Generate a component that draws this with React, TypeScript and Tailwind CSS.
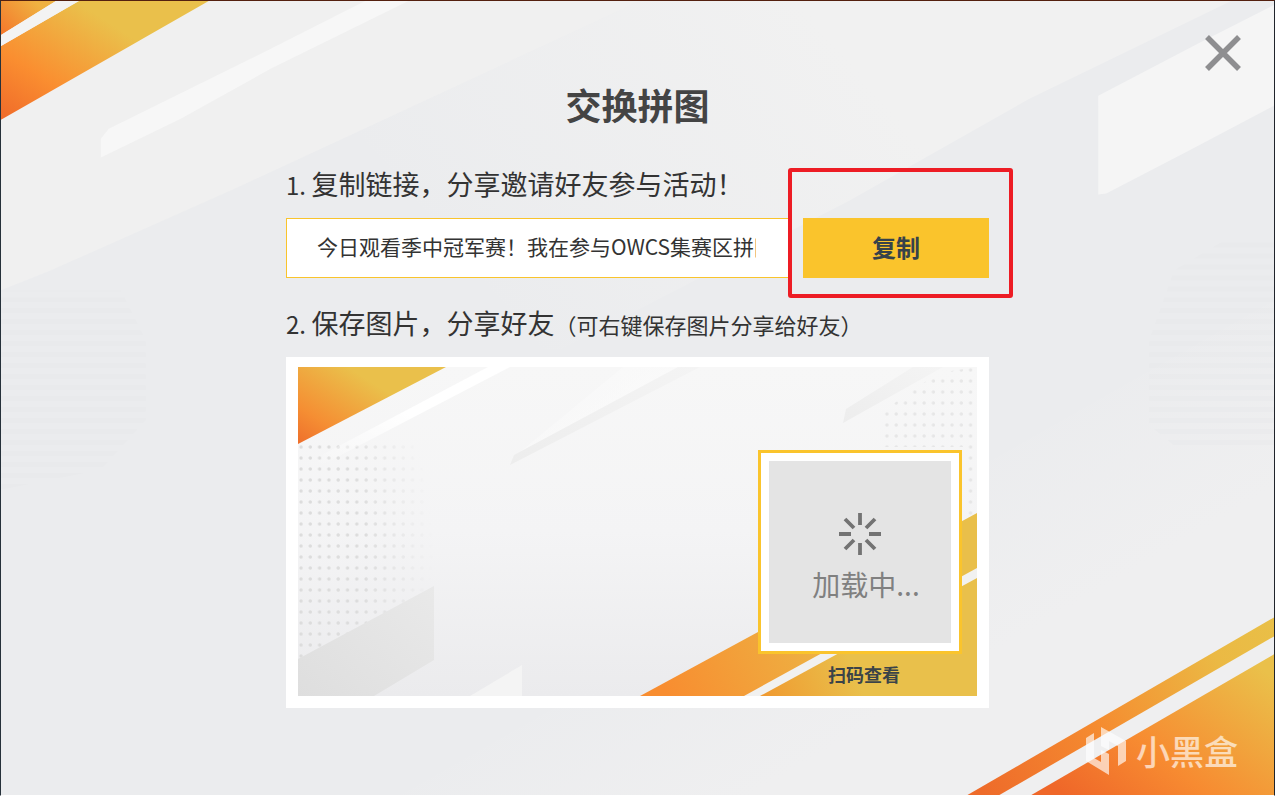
import React from "react";
import { clsx } from "clsx";

const shareText =
  "今日观看季中冠军赛！我在参与OWCS集赛区拼图活动，快来和我一起交换拼图吧！";

const Backdrop = () => (
  <svg
    className="absolute inset-0 h-full w-full"
    viewBox="0 0 1275 796"
    preserveAspectRatio="none"
    aria-hidden="true"
  >
    <defs>
      <linearGradient id="cornerTop" gradientUnits="userSpaceOnUse" x1="0" y1="115" x2="75" y2="0">
        <stop offset="0" stopColor="#f06c2a" />
        <stop offset="0.4" stopColor="#fa8e30" />
        <stop offset="1" stopColor="#eac04b" />
      </linearGradient>
      <linearGradient id="cornerTip" gradientUnits="userSpaceOnUse" x1="0" y1="32" x2="34" y2="0">
        <stop offset="0" stopColor="#f4792c" />
        <stop offset="1" stopColor="#efb141" />
      </linearGradient>
      <linearGradient id="stripe" gradientUnits="userSpaceOnUse" x1="985" y1="796" x2="1275" y2="625">
        <stop offset="0" stopColor="#ee6b2a" />
        <stop offset="0.4" stopColor="#f58c30" />
        <stop offset="0.8" stopColor="#ebb944" />
        <stop offset="1" stopColor="#e9bf47" />
      </linearGradient>
      <linearGradient id="cornerBottom" gradientUnits="userSpaceOnUse" x1="1090" y1="815" x2="1225" y2="640">
        <stop offset="0" stopColor="#ef6729" />
        <stop offset="0.4" stopColor="#f78b31" />
        <stop offset="1" stopColor="#eac04a" />
      </linearGradient>
      <linearGradient id="fadeLow" gradientUnits="userSpaceOnUse" x1="900" y1="480" x2="1000" y2="650">
        <stop offset="0" stopColor="#efeff0" stopOpacity="0" />
        <stop offset="1" stopColor="#efeff0" />
      </linearGradient>
      <linearGradient id="sheen" gradientUnits="userSpaceOnUse" x1="850" y1="60" x2="520" y2="340">
        <stop offset="0" stopColor="#f1f1f1" />
        <stop offset="1" stopColor="#f1f1f1" stopOpacity="0" />
      </linearGradient>
      <pattern id="pageLines" width="150" height="11" patternUnits="userSpaceOnUse">
        <rect width="150" height="5" fill="#e7e8ea" />
      </pattern>
    </defs>
    <rect width="1275" height="796" fill="#ebecee" />
    <polygon points="400,796 1275,300 1275,796" fill="url(#fadeLow)" />
    <polygon points="0,290 120,290 145,340 145,420 100,470 0,490" fill="url(#pageLines)" opacity="0.5" />
    <polygon points="1275,240 1225,240 1175,270 1150,340 1150,425 1180,450 1275,450" fill="url(#pageLines)" opacity="0.5" />
    <polygon points="0,0 640,0 230,190 50,270 0,290" fill="#f0f0f0" />
    <polygon points="640,0 1232,0 1030,98 850,200 560,350 300,350 230,190" fill="url(#sheen)" />
    <polygon points="108,128 250,58 335,15 365,0 408,0 270,68 180,118 100,157 100,138" fill="#f7f7f7" />
    <polygon points="1099,95 1200,42 1275,4 1275,105 1190,150 1107,193 1099,194" fill="#f5f5f5" />
    <polygon points="0,0 55,0 0,34" fill="url(#cornerTip)" />
    <polygon points="78,0 208,0 0,119 0,45" fill="url(#cornerTop)" />
    <polygon points="55,0 78,0 0,45 0,34" fill="#f3f3f3" />
    <polygon points="968,796 1275,618 1275,637 1000,796" fill="url(#stripe)" />
    <polygon points="1032,796 1275,655 1275,796" fill="url(#cornerBottom)" />
  </svg>
);

const PosterArt = () => (
  <svg
    className="absolute inset-0 h-full w-full"
    viewBox="0 0 679 329"
    preserveAspectRatio="none"
    aria-hidden="true"
  >
    <defs>
      <linearGradient id="posterBase" x1="0" y1="0" x2="0" y2="1">
        <stop offset="0" stopColor="#f7f7f7" />
        <stop offset="0.5" stopColor="#f4f4f5" />
        <stop offset="1" stopColor="#ebebed" />
      </linearGradient>
      <linearGradient id="posterCorner" gradientUnits="userSpaceOnUse" x1="0" y1="78" x2="50" y2="0">
        <stop offset="0" stopColor="#ee6e2b" />
        <stop offset="0.35" stopColor="#f58e33" />
        <stop offset="1" stopColor="#eac04b" />
      </linearGradient>
      <linearGradient id="posterStripe" gradientUnits="userSpaceOnUse" x1="370" y1="329" x2="560" y2="230">
        <stop offset="0" stopColor="#f88d30" />
        <stop offset="1" stopColor="#e9bf4a" />
      </linearGradient>
      <linearGradient id="posterFloor" gradientUnits="userSpaceOnUse" x1="460" y1="329" x2="550" y2="290">
        <stop offset="0" stopColor="#f0982f" />
        <stop offset="1" stopColor="#e9c04b" />
      </linearGradient>
      <linearGradient id="posterShade" x1="0" y1="1" x2="1" y2="0">
        <stop offset="0" stopColor="#dedede" />
        <stop offset="1" stopColor="#e9e9e9" />
      </linearGradient>
      <linearGradient id="ray" x1="0" y1="1" x2="1" y2="0">
        <stop offset="0" stopColor="#ffffff" stopOpacity="0" />
        <stop offset="0.5" stopColor="#ffffff" />
        <stop offset="1" stopColor="#ffffff" />
      </linearGradient>
      <linearGradient id="glow" x1="0" y1="0" x2="1" y2="0.6">
        <stop offset="0" stopColor="#fbfbfb" stopOpacity="0" />
        <stop offset="1" stopColor="#fbfbfb" />
      </linearGradient>
      <linearGradient id="rayShade" x1="0" y1="1" x2="1" y2="0">
        <stop offset="0" stopColor="#ededed" />
        <stop offset="1" stopColor="#f4f4f4" />
      </linearGradient>
      <pattern id="posterDots" width="9.3" height="11" patternUnits="userSpaceOnUse">
        <circle cx="3" cy="3" r="1.7" fill="#dcdcdc" />
      </pattern>
      <radialGradient id="dotFade" cx="0" cy="0.5" r="1">
        <stop offset="0.5" stopColor="#fff" />
        <stop offset="1" stopColor="#000" />
      </radialGradient>
      <mask id="dotMask">
        <rect y="65" width="135" height="240" fill="url(#dotFade)" />
      </mask>
    </defs>
    <rect width="679" height="329" fill="url(#posterBase)" />
    <rect y="76" width="135" height="215" fill="url(#posterDots)" mask="url(#dotMask)" />
    <polygon points="585,44 640,6 679,0 679,155 665,155 665,80 585,80" fill="url(#posterDots)" opacity="0.6" />
    <polygon points="190,0 212,0 20,100 20,90" fill="url(#ray)" />
    <polygon points="325,0 388,0 216,90" fill="url(#glow)" />
    <polygon points="380,0 402,0 212,98 216,88" fill="url(#rayShade)" />
    <polygon points="548,42 615,0 645,0 545,56" fill="url(#rayShade)" />
    <polygon points="0,292 136,219 136,293 76,329 0,329" fill="url(#posterShade)" />
    <polygon points="172,329 224,298 224,329" fill="#f4f4f4" />
    <polygon points="0,0 148,0 0,77" fill="url(#posterCorner)" />
    <polygon points="342,329 679,146 679,329" fill="#f1f1f0" />
    <polygon points="342,329 679,146 679,201 446,329" fill="url(#posterStripe)" />
    <polygon points="462,329 679,211 679,329" fill="url(#posterFloor)" />
  </svg>
);

const Spinner = () => (
  <svg
    className="h-11 w-11"
    viewBox="0 0 44 44"
    stroke="#737373"
    strokeWidth="3.8"
    aria-hidden="true"
  >
    <path d="M22 1v12M22 31v12M1 22h12M31 22h12M7 7l9 9M28 28l9 9M7 37l9-9M28 16l9-9" />
  </svg>
);

const Watermark = () => (
  <div className="absolute right-9 bottom-5 flex items-center gap-2.5 text-white/65">
    <svg className="h-12 w-10" viewBox="0 0 40 48" fill="currentColor" aria-hidden="true">
      <path d="M0 11l8-5v25l7 4V23l8 4v21L0 34z" />
      <path d="M15 0l25 14v20l-8 5V19l-9-5v9l-8-4z" />
    </svg>
    <span className="text-[34px] leading-12 font-medium">小黑盒</span>
  </div>
);

const StepTitle = ({
  step,
  children,
  className,
}: {
  step: string;
  children: React.ReactNode;
  className?: string;
}) => (
  <h2 className={clsx("h-9 text-[27px] leading-9 whitespace-nowrap text-[#333]", className)}>
    <span className="text-2xl leading-8">{step} </span>
    {children}
  </h2>
);

export default function App() {
  return (
    <div className="relative min-h-screen overflow-hidden border border-t-[#54200f] border-r-[#20242b] border-b-transparent border-l-[#26313a] font-['Noto_Sans_CJK_SC',sans-serif]">
      <Backdrop />

      <button type="button" aria-label="关闭" className="absolute top-8 right-8">
        <svg className="h-10 w-10" viewBox="0 0 40 40" stroke="#8e8e90" strokeWidth="5.5">
          <path d="M5 4l32 32M37 4L5 36" />
        </svg>
      </button>

      <main className="relative mx-auto w-full max-w-[703px] pt-[79px] pb-20">
        <h1 className="text-center text-4xl leading-12 font-bold text-[#444]">交换拼图</h1>

        <StepTitle step="1." className="mt-[38px]">
          复制链接，分享邀请好友参与活动！
        </StepTitle>
        <div className="mt-4 flex gap-3">
          <input
            type="text"
            readOnly
            aria-label="分享链接"
            value={shareText}
            className="h-15 min-w-0 flex-1 border border-[#f9c42c] bg-white pr-[34px] pb-1 pl-[30px] text-[21px] text-[#333] outline-none"
          />
          <div className="relative">
            <button
              type="button"
              className="h-15 w-[186px] bg-[#fac42c] pb-0.5 text-2xl font-bold text-[#36424a]"
            >
              复制
            </button>
            <div className="pointer-events-none absolute -top-[50px] -right-6 -bottom-5 -left-[15px] rounded-[3px] border-4 border-[#ed1c24]" />
          </div>
        </div>

        <StepTitle step="2." className="mt-[27px]">
          保存图片，分享好友
          <span className="text-[22px] leading-8">（可右键保存图片分享给好友）</span>
        </StepTitle>
        <div className="mt-4 bg-white px-3 pt-[10px] pb-3">
          <div className="relative flex h-[329px] justify-end pt-[83px] pr-[15px]">
            <PosterArt />
            <div className="relative flex flex-col items-center">
              <div className="border-3 border-[#fac42c] bg-white p-2">
                <div className="flex h-[182px] w-[182px] flex-col items-center justify-center bg-[#e4e4e4] pt-3">
                  <Spinner />
                  <p className="mt-2 pl-3 text-[28px] leading-10 text-[#808080]">加载中...</p>
                </div>
              </div>
              <p className="mt-2 pl-2 text-lg leading-6 font-bold text-[#3b4348]">扫码查看</p>
            </div>
          </div>
        </div>
      </main>

      <Watermark />
    </div>
  );
}
